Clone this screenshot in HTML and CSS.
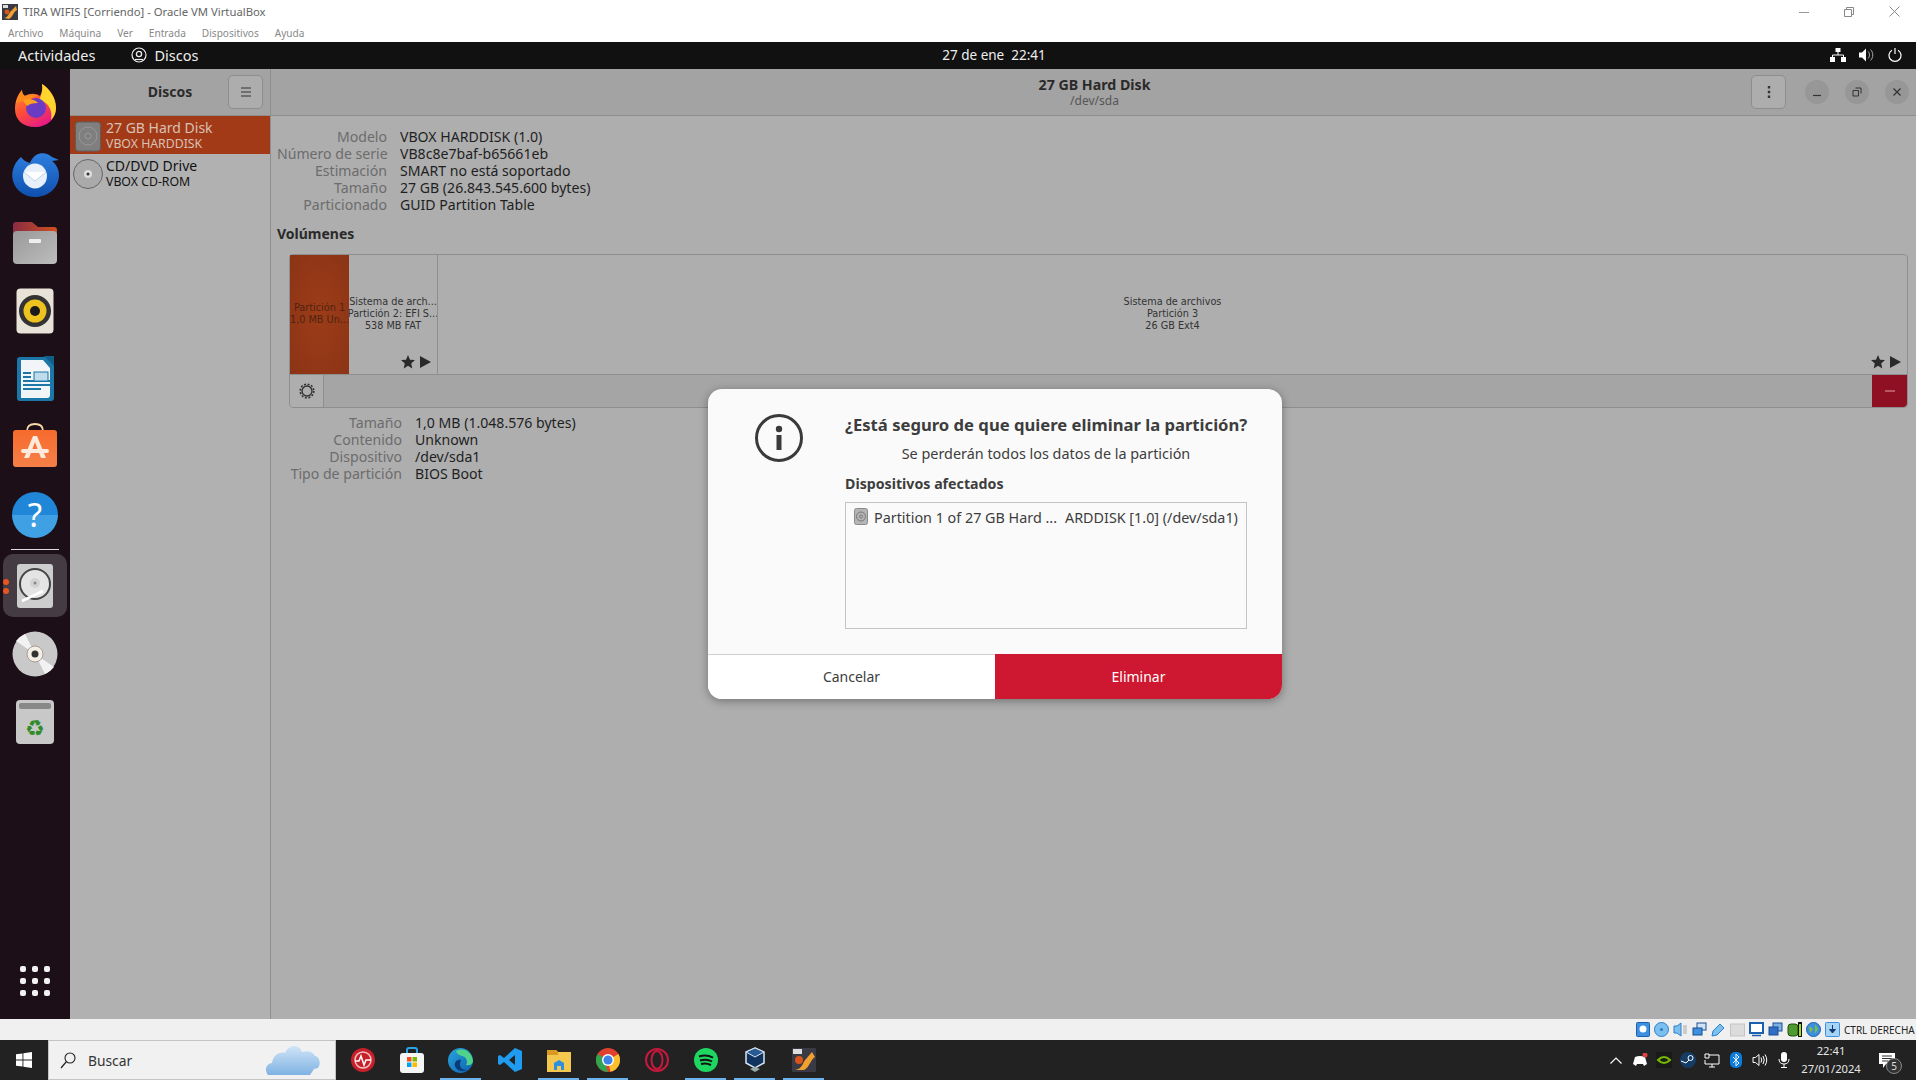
FILE: index.html
```html
<!DOCTYPE html>
<html lang="es">
<head>
  <meta charset="UTF-8">
  <title>TIRA WIFIS [Corriendo] - Oracle VM VirtualBox</title>
  <link rel="stylesheet" href="styles.css">
</head>
<body>
  <!-- VirtualBox host window -->
  <div class="vbox-title">
    <svg class="vbox-logo" width="16" height="16" viewBox="0 0 16 16"><rect width="16" height="16" fill="#3a3a44"/><rect x="1" y="1" width="5" height="3" fill="#ddd"/><path d="M2 14 C7 13 7 8 9 7 L14 2 L15 6 C11 8 11 13 7 15 Z" fill="#f0a030"/><circle cx="5" cy="8" r="2.4" fill="#d8541a"/></svg>
    <span class="vbox-name">TIRA WIFIS [Corriendo] - Oracle VM VirtualBox</span>
    <div class="win-controls">
      <svg width="10" height="10" viewBox="0 0 10 10"><path d="M0 5.5h10" stroke="#999" fill="none"/></svg>
      <svg width="10" height="10" viewBox="0 0 10 10"><path d="M.5 2.5h7v7h-7zM2.5 2.5v-2h7v7h-2" stroke="#888" fill="none"/></svg>
      <svg width="11" height="11" viewBox="0 0 11 11"><path d="M.5.5l10 10M10.5.5l-10 10" stroke="#888" fill="none"/></svg>
    </div>
  </div>
  <div class="vbox-menu">
    <span>Archivo</span><span>Máquina</span><span>Ver</span><span>Entrada</span><span>Dispositivos</span><span>Ayuda</span>
  </div>

  <!-- GNOME top bar -->
  <div class="topbar">
    <div class="topbar-left">
      <span class="activities">Actividades</span>
      <svg width="16" height="16" viewBox="0 0 16 16"><circle cx="8" cy="8" r="7" fill="none" stroke="#eee" stroke-width="1.2"/><circle cx="8" cy="7" r="2.6" fill="none" stroke="#eee" stroke-width="1.3"/><path d="M4 12.5h8" stroke="#eee" stroke-width="1.2"/></svg>
      <span class="app-name">Discos</span>
    </div>
    <div class="clock">27 de ene&nbsp; 22:41</div>
    <div class="topbar-right">
      <svg width="16" height="14" viewBox="0 0 16 14"><path d="M5.5 0h5v4h-5zM0 9h5v5H0zM11 9h5v5h-5z" fill="#fff"/><path d="M8 4v3M2.5 9V7h11v2" stroke="#fff" fill="none"/></svg>
      <svg width="16" height="14" viewBox="0 0 16 14"><path d="M0 4.500h3l4-4v13l-4-4H0z" fill="#fff"/><path d="M9 3.500c2 2 2 5 0 7M11.500 1.500c3 3 3 8 0 11" stroke="#aaa" fill="none"/></svg>
      <svg width="14" height="14" viewBox="0 0 14 14"><path d="M4 2.200a6 6 0 1 0 6 0M7 0v6" stroke="#fff" stroke-width="1.200" fill="none"/></svg>
    </div>
  </div>

  <div class="desktop">
    <!-- Dock -->
    <nav class="dock">
      <div class="dock-item dock-lift">
        <svg width="44" height="44" viewBox="0 0 44 44"><defs><linearGradient id="ff" x1="0" y1="0" x2="0.6" y2="1"><stop offset="0" stop-color="#ffa52a"/><stop offset=".55" stop-color="#ff4f36"/><stop offset="1" stop-color="#e81b87"/></linearGradient></defs><path d="M2 26C2 18 5 11 9 7c0 3 1 5 3 6 5-3 11-3 15 0 2-4 3-8 2-12 8 5 14 14 14 24 0 11-9 19-21 19S2 37 2 26z" fill="url(#ff)"/><path d="M29 1c8 5 14 14 14 24 0 5-2 9-5 12 2-10-3-18-12-20 3-5 4-11 3-16z" fill="#ffd52e"/><path d="M3 20c1-5 3-9 6-13 0 3 1 5 3 6 4-2 10-2 13 0-4 0-7 2-8 4-4 1-10 1-14 3z" fill="#ff8a1e"/><circle cx="23" cy="25" r="10" fill="#6b3bc4"/><path d="M10 18c5-3 12-2 15 2-5 0-9 1-11 3z" fill="#ffa11e"/></svg>
      </div>
      <div class="dock-item">
        <svg width="48" height="46" viewBox="0 0 48 46"><defs><linearGradient id="tb" x1="0" y1="0" x2="0" y2="1"><stop offset="0" stop-color="#2d7fe0"/><stop offset="1" stop-color="#0f4fae"/></linearGradient></defs><path d="M10 5C2 12 0 21 2 29c3 10 12 16 22 16 13 0 24-9 24-22 0-6-3-11-7-14l7-1-7-3c-4-4-11-5-16-2-3 2-5 5-6 8-4-1-7-3-9-6z" fill="url(#tb)"/><ellipse cx="24" cy="24" rx="12" ry="12.500" fill="#e6f0fa"/><path d="M13 20l11 9 11-9" fill="#fff" stroke="#bcd3ea"/></svg>
      </div>
      <div class="dock-item">
        <svg width="46" height="44" viewBox="0 0 46 44"><defs><linearGradient id="fo" x1="0" y1="0" x2="1" y2="0"><stop offset="0" stop-color="#8a2c44"/><stop offset="1" stop-color="#d0501e"/></linearGradient><linearGradient id="fg" x1="0" y1="0" x2="1" y2="1"><stop offset="0" stop-color="#999"/><stop offset="1" stop-color="#bdbdbd"/></linearGradient></defs><path d="M1 14V4q0-3 3-3h16l6 5h16q3 0 3 3v8z" fill="url(#fo)"/><rect x="1" y="10" width="44" height="33" rx="4" fill="url(#fg)"/><rect x="17" y="18" width="12" height="4" rx="1" fill="#eee"/></svg>
      </div>
      <div class="dock-item">
        <svg width="38" height="46" viewBox="0 0 38 46"><rect x=".5" y=".5" width="37" height="45" rx="4" fill="#e8e3d8"/><circle cx="19" cy="23" r="16" fill="#333"/><circle cx="19" cy="23" r="11.500" fill="#eec21f"/><circle cx="19" cy="23" r="5" fill="#1a1a1a"/></svg>
      </div>
      <div class="dock-item">
        <svg width="38" height="46" viewBox="0 0 38 46"><path d="M4 1h26l8 8v33q0 3-3 3H4q-3 0-3-3V4q0-3 3-3z" fill="#1b77a8"/><path d="M5 4h22l7 8v27q0 3-3 3H5z" fill="#f2f5f7"/><path d="M28 0h10v10z" fill="#0f5f88"/><path d="M7 17h8M7 21h8M7 25h27M7 29h27M7 33h18" stroke="#1b77a8" stroke-width="2"/><rect x="18" y="16" width="14" height="9" fill="#bfdcec" stroke="#1b77a8"/></svg>
      </div>
      <div class="dock-item dock-lift">
        <svg width="46" height="46" viewBox="0 0 46 46"><defs><linearGradient id="ap" x1="0" y1="0" x2="0" y2="1"><stop offset="0" stop-color="#f76a2d"/><stop offset="1" stop-color="#f58048"/></linearGradient></defs><path d="M15 9q0-7 8-7t8 7" stroke="#f6d9a8" stroke-width="1.800" fill="none"/><rect x="1" y="8" width="44" height="37" rx="3" fill="url(#ap)"/><path d="M12 36L21 14h4l9 22h-5l-6-16-6 16z" fill="#fdeadd"/><rect x="9" y="27" width="28" height="4" rx="2" fill="#fdeadd"/></svg>
      </div>
      <div class="dock-item">
        <div class="help-icon">?</div>
      </div>
      <div class="dock-sep"></div>
      <div class="dock-item dock-active">
        <span class="run-dots"><i></i><i></i></span>
        <svg width="36" height="44" viewBox="0 0 36 44"><rect width="36" height="44" rx="3" fill="#cdcdcd"/><circle cx="18" cy="20" r="15" fill="#e4e4e4" stroke="#444" stroke-width="2"/><circle cx="18" cy="19" r="5" fill="#d2d2d2"/><circle cx="18" cy="19" r="1.500" fill="#888"/><path d="M5 37l21-10" stroke="#fff" stroke-width="2.500"/></svg>
      </div>
      <div class="dock-item">
        <svg width="46" height="46" viewBox="0 0 46 46"><circle cx="23" cy="23" r="22.500" fill="#c9c9c9"/><path d="M23 23L4 10a23 23 0 0 1 9-7zM23 23l19 13a23 23 0 0 1-9 7z" fill="#f2f2f2"/><circle cx="23" cy="23" r="8" fill="#f4efe4" stroke="#a99"/><circle cx="23" cy="23" r="3.500" fill="#333"/></svg>
      </div>
      <div class="dock-item">
        <svg width="38" height="44" viewBox="0 0 38 44"><rect width="38" height="44" rx="4" fill="#c8c8c8"/><rect x="3" y="3" width="32" height="6" rx="2" fill="#888"/><text class="recycle" x="19" y="36" text-anchor="middle">♻</text></svg>
      </div>
      <div class="dock-grid">
        <i></i><i></i><i></i><i></i><i></i><i></i><i></i><i></i><i></i>
      </div>
    </nav>

    <!-- Discos -->
    <aside class="sidebar">
      <header class="side-head">
        <span class="side-title">Discos</span>
        <button class="head-btn menu-btn">
          <svg width="12" height="10" viewBox="0 0 12 10"><path d="M1 1h10M1 5h10M1 9h10" stroke="#333" fill="none"/></svg>
        </button>
      </header>
      <div class="disk-row disk-selected">
        <svg width="30" height="36" viewBox="0 0 30 36"><rect x="2.500" y="5" width="25" height="29" rx="3" fill="#7f7f7f" stroke="#5e5e5e"/><circle cx="15" cy="19" r="9" fill="none" stroke="#999"/><circle cx="15" cy="19" r="3" fill="none" stroke="#999"/></svg>
        <div class="disk-text"><div class="disk-name">27 GB Hard Disk</div><div class="disk-sub">VBOX HARDDISK</div></div>
      </div>
      <div class="disk-row">
        <svg width="30" height="36" viewBox="0 0 30 36"><circle cx="15" cy="19" r="14.500" fill="#aaa" stroke="#666"/><circle cx="15" cy="19" r="4" fill="#ddd"/><circle cx="15" cy="19" r="1.500" fill="#333"/></svg>
        <div class="disk-text"><div class="disk-name">CD/DVD Drive</div><div class="disk-sub">VBOX CD-ROM</div></div>
      </div>
    </aside>

    <main class="content">
      <header class="content-head">
        <div class="head-title">
          <div class="disk-heading">27 GB Hard Disk</div>
          <div class="disk-path">/dev/sda</div>
        </div>
        <button class="head-btn kebab-btn">
          <svg width="4" height="12" viewBox="0 0 4 12"><path d="M.8 0h2.400v2.400H.8zM.8 4.800h2.400v2.400H.8zM.8 9.600h2.400V12H.8z" fill="#333"/></svg>
        </button>
        <span class="round-btn"><svg width="10" height="10" viewBox="0 0 10 10"><path d="M1 8.500h8" stroke="#333" stroke-width="1.200"/></svg></span>
        <span class="round-btn"><svg width="10" height="10" viewBox="0 0 10 10"><path d="M1 3.500h5.500V9H1zM3.500 1H9v5.500" stroke="#333" fill="none"/></svg></span>
        <span class="round-btn"><svg width="10" height="10" viewBox="0 0 10 10"><path d="M1.500 1.500l7 7M8.500 1.500l-7 7" stroke="#333" stroke-width="1.300"/></svg></span>
      </header>

      <div class="info-grid">
        <span class="info-label">Modelo</span><span>VBOX HARDDISK (1.0)</span>
        <span class="info-label">Número de serie</span><span>VB8c8e7baf-b65661eb</span>
        <span class="info-label">Estimación</span><span>SMART no está soportado</span>
        <span class="info-label">Tamaño</span><span>27 GB (26.843.545.600 bytes)</span>
        <span class="info-label">Particionado</span><span>GUID Partition Table</span>
      </div>

      <h2 class="vol-title">Volúmenes</h2>

      <div class="volumes">
        <div class="vol-bar">
          <div class="part part-one"><div>Partición 1</div><div>1,0 MB Un...</div></div>
          <div class="part part-two">
            <div>Sistema de arch...</div><div>Partición 2: EFI S...</div><div>538 MB FAT</div>
            <div class="emblems">
              <svg width="14" height="14" viewBox="0 0 14 14"><path d="M7 0l2 4.700 5 .4-3.800 3.300L11.300 13.500 7 10.800 2.700 13.500 3.800 8.400 0 5.100l5-.4z" fill="#2a2a2a"/></svg>
              <svg width="11" height="12" viewBox="0 0 11 12"><path d="M0 0l11 6-11 6z" fill="#2a2a2a"/></svg>
            </div>
          </div>
          <div class="part part-three">
            <div>Sistema de archivos</div><div>Partición 3</div><div>26 GB Ext4</div>
            <div class="emblems">
              <svg width="14" height="14" viewBox="0 0 14 14"><path d="M7 0l2 4.700 5 .4-3.800 3.300L11.300 13.500 7 10.800 2.700 13.500 3.800 8.400 0 5.100l5-.4z" fill="#2a2a2a"/></svg>
              <svg width="11" height="12" viewBox="0 0 11 12"><path d="M0 0l11 6-11 6z" fill="#2a2a2a"/></svg>
            </div>
          </div>
        </div>
        <div class="vol-tools">
          <span class="gear-btn">
            <svg width="16" height="16" viewBox="0 0 16 16"><circle cx="8" cy="8" r="5" fill="none" stroke="#333" stroke-width="1.400"/><circle cx="8" cy="8" r="6.800" fill="none" stroke="#333" stroke-width="1.600" stroke-dasharray="2 1.600"/></svg>
          </span>
          <span class="del-btn"><svg width="10" height="2" viewBox="0 0 10 2"><path d="M0 1h10" stroke="#e3a0a8"/></svg></span>
        </div>
      </div>

      <div class="info-grid part-info">
        <span class="info-label">Tamaño</span><span>1,0 MB (1.048.576 bytes)</span>
        <span class="info-label">Contenido</span><span>Unknown</span>
        <span class="info-label">Dispositivo</span><span>/dev/sda1</span>
        <span class="info-label">Tipo de partición</span><span>BIOS Boot</span>
      </div>
    </main>

    <!-- Confirm dialog -->
    <section class="dialog">
      <div class="dialog-body">
        <svg class="dialog-icon" width="48" height="48" viewBox="0 0 48 48"><circle cx="24" cy="24" r="22.500" fill="none" stroke="#3a3a3a" stroke-width="3"/><circle cx="24" cy="15" r="3.200" fill="#3a3a3a"/><rect x="21.500" y="21" width="5" height="15" fill="#3a3a3a"/></svg>
        <div class="dialog-main">
          <h1 class="dialog-title">¿Está seguro de que quiere eliminar la partición?</h1>
          <p class="dialog-sub">Se perderán todos los datos de la partición</p>
          <h3 class="dialog-label">Dispositivos afectados</h3>
          <div class="dialog-list">
            <svg width="14" height="17" viewBox="0 0 14 17"><rect x=".5" y=".5" width="13" height="16" rx="2" fill="#b5b5b5" stroke="#8a8a8a"/><circle cx="7" cy="8.500" r="4.500" fill="none" stroke="#777"/><circle cx="7" cy="8.500" r="1.500" fill="none" stroke="#777"/></svg>
            <span class="list-name">Partition 1 of 27 GB Hard ...</span>
            <span class="list-rest">ARDDISK [1.0] (/dev/sda1)</span>
          </div>
        </div>
      </div>
      <div class="dialog-actions">
        <button class="btn-cancel">Cancelar</button>
        <button class="btn-delete">Eliminar</button>
      </div>
    </section>
  </div>

  <!-- VirtualBox status bar -->
  <div class="statusbar">
    <svg width="14" height="15" viewBox="0 0 14 15"><rect x=".5" y=".5" width="13" height="14" rx="1" fill="#3d8fe0" stroke="#1c5fae"/><circle cx="7" cy="7" r="3.500" fill="#fff"/></svg>
    <svg width="15" height="15" viewBox="0 0 15 15"><circle cx="7.500" cy="7.500" r="7" fill="#7cc0f0" stroke="#2f7fc8"/><circle cx="7.500" cy="7.500" r="1.600" fill="#2f7fc8"/></svg>
    <svg width="15" height="15" viewBox="0 0 15 15"><path d="M1 4h3l4-3v13l-4-3H1z" fill="#7cc0f0" stroke="#2f7fc8"/><path d="M10 3v9h4V3z" fill="#ccc"/></svg>
    <svg width="15" height="15" viewBox="0 0 15 15"><rect x="5" y="1" width="9" height="7" fill="#cfe4f7" stroke="#1c4f8e"/><rect x="1" y="6" width="9" height="7" fill="#3d8fe0" stroke="#1c4f8e"/></svg>
    <svg width="15" height="15" viewBox="0 0 15 15"><path d="M1 14l1-5 7-7 4 4-7 7z" fill="#7cc0f0" stroke="#2f7fc8"/></svg>
    <svg width="15" height="15" viewBox="0 0 15 15"><rect x=".5" y="2" width="14" height="12" fill="#dcdcdc" stroke="#c4c4c4"/></svg>
    <svg width="15" height="15" viewBox="0 0 15 15"><rect x="1" y="1" width="13" height="10" fill="#fff" stroke="#1c5fae" stroke-width="2"/><path d="M3 13.500h9" stroke="#1c5fae" stroke-width="1.500"/></svg>
    <svg width="15" height="15" viewBox="0 0 15 15"><rect x="5" y="1" width="9" height="8" fill="#7cb0e8" stroke="#1c4f8e"/><rect x="1" y="5" width="9" height="8" fill="#2f6fc8" stroke="#1c4f8e"/></svg>
    <svg width="15" height="15" viewBox="0 0 15 15"><rect x="1" y="2" width="10" height="12" rx="3" fill="#4f9a30" stroke="#1f4f10"/><rect x="11" y="0" width="4" height="15" fill="#111"/><rect x="12" y="2" width="2" height="12" fill="#9ee020"/></svg>
    <svg width="15" height="15" viewBox="0 0 15 15"><circle cx="7.500" cy="7.500" r="7" fill="#3d8fe0" stroke="#1c5fae"/><path d="M3 4l4 3-3 4M9 2l3 5-3 5" fill="#7cc040"/></svg>
    <svg width="15" height="15" viewBox="0 0 15 15"><rect x=".5" y=".5" width="14" height="14" rx="1" fill="#a8d4f4" stroke="#3d8fe0"/><path d="M7.500 3v5M4.500 7.500h6l-3 3.500z" fill="#123a78" stroke="#123a78"/></svg>
    <span class="status-text">CTRL DERECHA</span>
  </div>

  <!-- Windows taskbar -->
  <footer class="taskbar">
    <div class="start-btn">
      <svg width="16" height="16" viewBox="0 0 16 16"><path d="M0 2.300L6.500 1.400V7.500H0zM7.400 1.300L16 0V7.500H7.400zM0 8.500H6.500V14.600L0 13.700zM7.400 8.500H16V16L7.400 14.700z" fill="#fff"/></svg>
    </div>
    <div class="search-box">
      <svg width="16" height="17" viewBox="0 0 16 17"><circle cx="10" cy="6" r="5" fill="none" stroke="#222" stroke-width="1.100"/><path d="M6.500 9.500L1 16" stroke="#222" stroke-width="1.200"/></svg>
      <span class="search-text">Buscar</span>
      <svg class="cloud" width="56" height="30" viewBox="0 0 56 30"><defs><linearGradient id="cl" x1="0" y1="0" x2="0" y2="1"><stop offset="0" stop-color="#cfe4f8"/><stop offset="1" stop-color="#7fb2e2"/></linearGradient></defs><path d="M3 30c-4-5-2-11 4-12 1-7 7-12 13-10 4-9 14-9 17-1 6-2 11 0 13 4 5 1 6 8 3 12l-4 1-4 6z" fill="url(#cl)"/></svg>
    </div>
    <div class="task-icons">
      <span class="task-slot"><svg width="24" height="24" viewBox="0 0 24 24"><circle cx="12" cy="12" r="12" fill="#c8202a"/><circle cx="12" cy="12" r="8" fill="none" stroke="#f2c4c4" stroke-width="1.500"/><path d="M4 13h4l2-5 3 9 2-5h5" fill="none" stroke="#fff" stroke-width="1.500"/></svg></span>
      <span class="task-slot"><svg width="24" height="26" viewBox="0 0 24 26"><path d="M7 7V3q0-2 2-2h6q2 0 2 2v4" fill="none" stroke="#2aa4e8" stroke-width="2"/><rect y="6" width="24" height="20" rx="3" fill="#f5f5f5"/><rect x="7" y="10" width="4.500" height="4.500" fill="#f25022"/><rect x="12.500" y="10" width="4.500" height="4.500" fill="#7fba00"/><rect x="7" y="15.500" width="4.500" height="4.500" fill="#00a4ef"/><rect x="12.500" y="15.500" width="4.500" height="4.500" fill="#ffb900"/></svg></span>
      <span class="task-slot task-open"><svg width="25" height="25" viewBox="0 0 25 25"><defs><linearGradient id="ed" x1="0" y1="0" x2="1" y2="1"><stop offset="0" stop-color="#2aa6dc"/><stop offset="1" stop-color="#0c5fb0"/></linearGradient></defs><circle cx="12.500" cy="12.500" r="12.500" fill="url(#ed)"/><path d="M8 3c8-4 16 1 17 10 0 3-3 5-7 4 2-3 1-8-4-9-3-1-5-2-6-5z" fill="#4fd38a"/><path d="M13 12c-5-1-8 4-5 8 2 3 7 4 11 2-5 0-9-3-6-10z" fill="#0b3a78"/></svg></span>
      <span class="task-slot"><svg width="24" height="24" viewBox="0 0 24 24"><path d="M17 0l7 3v18l-7 3-11-10-4 3-2-1V8l2-1 4 3zM17 7l-6 5 6 5z" fill="#1f9cf0" fill-rule="evenodd"/></svg></span>
      <span class="task-slot task-open"><svg width="24" height="24" viewBox="0 0 24 24"><path d="M0 2h9l2 2h13v20H0z" fill="#f4c74e"/><path d="M0 2h9l2 2v3H0z" fill="#d99a24"/><path d="M7 22v-7l5-3 5 3v7h-3v-4h-4v4z" fill="#2d8fe0"/></svg></span>
      <span class="task-slot task-open"><svg width="24" height="24" viewBox="0 0 24 24"><circle cx="12" cy="12" r="12" fill="#e0402e"/><path d="M12 12L1.600 18a12 12 0 0 1 0-12z" fill="#32a34f"/><path d="M12 12l10.400-6a12 12 0 0 1-8 17.800z" fill="#fbc02d"/><path d="M12 24a12 12 0 0 1-10.400-6L8 12z" fill="#32a34f"/><circle cx="12" cy="12" r="6" fill="#fff"/><circle cx="12" cy="12" r="4.600" fill="#3f82e8"/></svg></span>
      <span class="task-slot"><svg width="24" height="24" viewBox="0 0 24 24"><circle cx="12" cy="12" r="11" fill="none" stroke="#c8183e" stroke-width="2"/><ellipse cx="12" cy="12" rx="5.500" ry="9" fill="none" stroke="#c8183e" stroke-width="2"/></svg></span>
      <span class="task-slot task-open"><svg width="24" height="24" viewBox="0 0 24 24"><circle cx="12" cy="12" r="12" fill="#1ed760"/><path d="M5 8.500c5-1.500 10-1 14 1.200M6 12.500c4-1 9-.7 12 1M7 16c3-.8 7-.5 10 1" fill="none" stroke="#121212" stroke-width="2"/></svg></span>
      <span class="task-slot task-open"><svg width="20" height="26" viewBox="0 0 20 26"><path d="M10 1l9 4v11l-9 5-9-5V5z" fill="#10345e" stroke="#d8e4f0" stroke-width="1.500"/><path d="M10 1l9 4-9 5-9-5z" fill="#2a5a94" stroke="#d8e4f0"/><path d="M5 22l5 3 5-3-5-2z" fill="#9aa"/></svg></span>
      <span class="task-slot task-open"><svg width="24" height="24" viewBox="0 0 24 24"><rect width="24" height="24" rx="1" fill="#3a3a44"/><rect x="1" y="1" width="9" height="5" fill="#ddd"/><path d="M3 22c8-1 8-9 11-11l6-7 3 5c-5 3-5 10-11 13z" fill="#f0a030"/><circle cx="7" cy="12" r="4" fill="#d8541a"/></svg></span>
    </div>
    <div class="tray">
      <span class="tray-slot"><svg width="12" height="7" viewBox="0 0 12 7"><path d="M.5 6.500L6 1l5.500 5.500" stroke="#fff" fill="none" stroke-width="1.100"/></svg></span>
      <span class="tray-slot"><svg width="16" height="14" viewBox="0 0 16 14"><path d="M3 4q5-2 10 0l2 7-3 2-1-2H5l-1 2-3-2z" fill="#fff"/><circle cx="13" cy="2" r="2.500" fill="#e04040"/></svg></span>
      <span class="tray-slot"><svg width="16" height="16" viewBox="0 0 16 16"><rect width="16" height="16" fill="#1a1a1a"/><path d="M2 8q6-6 12 0-6 6-12 0z" fill="none" stroke="#76b900" stroke-width="2"/></svg></span>
      <span class="tray-slot"><svg width="16" height="16" viewBox="0 0 16 16"><circle cx="8" cy="8" r="8" fill="#153c64"/><circle cx="10.500" cy="6" r="2.500" fill="none" stroke="#fff"/><path d="M1 9l5 2 3-3" stroke="#fff" fill="none"/></svg></span>
      <span class="tray-slot"><svg width="16" height="15" viewBox="0 0 16 15"><path d="M5 2h10v9H1V7M1 1h4v4H1zM5 14h6M8 11v3" stroke="#fff" fill="none"/></svg></span>
      <span class="tray-slot"><svg width="12" height="16" viewBox="0 0 12 16"><rect width="12" height="16" rx="5" fill="#0a7ce0"/><path d="M3 5l6 6-3 3V2l3 3-6 6" stroke="#fff" fill="none"/></svg></span>
      <span class="tray-slot"><svg width="16" height="14" viewBox="0 0 16 14"><path d="M1 4.500h2.500L7 1.500v11L3.500 9.500H1zM9 4.500q1.500 2.500 0 5M11 3q2.500 4 0 8M13 1.500q3.500 5.500 0 11" stroke="#fff" fill="none"/></svg></span>
      <span class="tray-slot"><svg width="12" height="16" viewBox="0 0 12 16"><rect x="3" width="6" height="10" rx="3" fill="#fff"/><path d="M1 7q0 5 5 5t5-5M6 12v3M3 15.500h6" stroke="#fff" fill="none"/></svg></span>
      <div class="tray-clock"><div>22:41</div><div>27/01/2024</div></div>
      <span class="notif">
        <svg width="16" height="15" viewBox="0 0 16 15"><path d="M0 0h16v11H7l-3 4v-4H0z" fill="#fff"/><path d="M3 3h10M3 5.500h10M3 8h6" stroke="#333"/></svg>
        <span class="notif-count">5</span>
      </span>
    </div>
  </footer>
</body>
</html>
```

FILE: styles.css
```css
* {
  box-sizing: border-box;
}
body {
  margin: 0;
  width: 1916px;
  height: 1080px;
  overflow: hidden;
  display: flex;
  flex-direction: column;
  font-family: "Noto Sans", sans-serif;
  background: #fff;
}
h1, h2, h3, p {
  margin: 0;
}
button {
  font-family: inherit;
  cursor: pointer;
}

/* VirtualBox window */
.vbox-title {
  height: 23px;
  flex: none;
  display: flex;
  align-items: center;
  padding-left: 2px;
  background: #fff;
}
.vbox-name {
  margin-left: 5px;
  font-size: 11.300px;
  color: #666;
}
.win-controls {
  margin-left: auto;
  display: flex;
  gap: 35px;
  padding-right: 16px;
  align-items: center;
}
.vbox-menu {
  height: 19px;
  flex: none;
  display: flex;
  gap: 16px;
  padding-left: 8px;
  align-items: center;
  font-size: 10.100px;
  color: #888;
  background: #fff;
}

/* Top bar */
.topbar {
  height: 27px;
  flex: none;
  display: grid;
  grid-template-columns: 1fr auto 1fr;
  align-items: center;
  background: #111;
  color: #eee;
  font-size: 14.500px;
  padding: 0 14px 1px 18px;
}
.topbar-left {
  display: flex;
  align-items: center;
}
.activities {
  margin-right: 36px;
}
.app-name {
  margin-left: 7px;
}
.clock {
  font-size: 13.500px;
  margin-left: 68px;
}
.topbar-right {
  display: flex;
  justify-content: flex-end;
  align-items: center;
  gap: 13px;
}

.desktop {
  flex: 1;
  display: flex;
  position: relative;
  min-height: 0;
}

/* Dock */
.dock {
  width: 70px;
  flex: none;
  display: flex;
  flex-direction: column;
  align-items: center;
  padding: 4px 0;
  background: #1c0f18;
}
.dock-item {
  width: 64px;
  height: 68px;
  flex: none;
  position: relative;
  display: flex;
  align-items: center;
  justify-content: center;
}
.dock-lift svg {
  margin-bottom: 4px;
}
.dock-active {
  margin-top: 4px;
  height: 63px;
  margin-bottom: 3px;
  background: #443c42;
  border-radius: 10px;
}
.run-dots {
  position: absolute;
  left: 0;
  top: 25px;
  display: flex;
  flex-direction: column;
  gap: 3px;
}
.run-dots i {
  width: 6px;
  height: 6px;
  border-radius: 50%;
  background: #e9541f;
}
.help-icon {
  width: 46px;
  height: 46px;
  border-radius: 50%;
  background: linear-gradient(#1f86d8 50%, #3fa0e4 50%);
  color: #fff;
  font-size: 33px;
  line-height: 46px;
  text-align: center;
}
.recycle {
  font-family: "DejaVu Sans", sans-serif;
  font-size: 22px;
  fill: #2f8a28;
}
.dock-sep {
  width: 48px;
  height: 1px;
  flex: none;
  background: #ddd;
}
.dock-grid {
  margin-top: auto;
  height: 68px;
  display: grid;
  grid-template-columns: repeat(3, 6px);
  grid-auto-rows: 6px;
  gap: 6px;
  align-content: center;
}
.dock-grid i {
  background: #f2f2f2;
  border-radius: 2px;
}

/* Sidebar */
.sidebar {
  width: 201px;
  flex: none;
  background: #b1b1b1;
  border-right: 1px solid #8e8e8e;
  color: #111;
}
.side-head {
  height: 47px;
  display: flex;
  align-items: center;
  justify-content: flex-end;
  position: relative;
  padding-right: 7px;
  background: #a3a3a3;
  border-bottom: 1px solid #8e8e8e;
}
.side-title {
  position: absolute;
  left: 0;
  top: 13px;
  width: 200px;
  text-align: center;
  font-size: 14px;
  font-weight: 700;
  color: #2c2c2c;
}
.head-btn {
  height: 34px;
  width: 35px;
  padding: 0;
  display: flex;
  align-items: center;
  justify-content: center;
  background: #adadad;
  border: 1px solid #8d8d8d;
  border-radius: 5px;
}
.disk-row {
  height: 38px;
  display: flex;
  align-items: center;
  gap: 3px;
  padding-left: 3px;
}
.disk-row svg {
  flex: none;
}
.disk-selected {
  background: #a23a18;
  color: #d9c0b4;
}
.disk-text {
  line-height: 15px;
}
.disk-name {
  font-size: 14px;
}
.disk-sub {
  font-size: 12.300px;
  padding-top: 1px;
}

/* Content */
.content {
  flex: 1;
  min-width: 0;
  background: #aeaeae;
  color: #1f1f1f;
  font-size: 14.100px;
}
.content-head {
  height: 47px;
  display: flex;
  align-items: center;
  padding-right: 7px;
  background: #a3a3a3;
  border-bottom: 1px solid #8e8e8e;
}
.head-title {
  position: absolute;
  left: 273px;
  right: 0;
  text-align: center;
  pointer-events: none;
}
.disk-heading {
  font-size: 14.200px;
  font-weight: 700;
  line-height: 17px;
  color: #2a2a2a;
}
.disk-path {
  font-size: 12px;
  line-height: 15px;
  color: #555;
}
.kebab-btn {
  margin-left: auto;
  margin-right: 19px;
}
.round-btn {
  width: 24px;
  height: 24px;
  border-radius: 50%;
  background: #979797;
  display: flex;
  align-items: center;
  justify-content: center;
  margin-left: 16px;
}
.kebab-btn + .round-btn {
  margin-left: 0;
}
.info-grid {
  display: grid;
  grid-template-columns: 110px auto;
  justify-content: start;
  column-gap: 13px;
  padding: 12px 0 0 6px;
  line-height: 17px;
}
.info-label {
  text-align: right;
  color: #6c6c6c;
  white-space: nowrap;
}
.vol-title {
  font-size: 14px;
  font-weight: 700;
  line-height: 18px;
  margin: 12px 0 0 6px;
  color: #2a2a2a;
}
.volumes {
  margin: 11px 8px 0 18px;
  height: 154px;
  border: 1px solid #8e8e8e;
  border-radius: 4px;
  display: flex;
  flex-direction: column;
}
.vol-bar {
  height: 120px;
  display: flex;
  border-bottom: 1px solid #8e8e8e;
}
.part {
  position: relative;
  display: flex;
  flex-direction: column;
  justify-content: center;
  align-items: center;
  padding-bottom: 2px;
  font-family: "DejaVu Sans", sans-serif;
  font-size: 9.700px;
  line-height: 12px;
  color: #333;
  white-space: nowrap;
  overflow: hidden;
}
.part-one {
  width: 59px;
  flex: none;
  background: radial-gradient(ellipse at center, #9d3c17, #8b3416);
  color: #4e2412;
}
.part-two {
  width: 89px;
  flex: none;
  border-right: 1px solid #8e8e8e;
}
.part-three {
  flex: 1;
}
.emblems {
  position: absolute;
  right: 6px;
  bottom: 5px;
  display: flex;
  align-items: center;
  gap: 5px;
}
.vol-tools {
  flex: 1;
  display: flex;
  justify-content: space-between;
  background: #a5a5a5;
  border-radius: 0 0 4px 4px;
}
.gear-btn {
  width: 34px;
  display: flex;
  align-items: center;
  justify-content: center;
  background: #aeaeae;
  border-right: 1px solid #8e8e8e;
  border-radius: 0 0 0 4px;
}
.del-btn {
  width: 35px;
  display: flex;
  align-items: center;
  justify-content: center;
  background: #8f1023;
  border-radius: 0 0 4px 0;
}
.part-info {
  grid-template-columns: 113px auto;
  padding: 6px 0 0 18px;
}

/* Dialog */
.dialog {
  position: absolute;
  left: 708px;
  top: 320px;
  width: 574px;
  height: 310px;
  display: flex;
  flex-direction: column;
  background: #fafafa;
  border-radius: 14px;
  overflow: hidden;
  box-shadow: 0 2px 10px rgba(0, 0, 0, 0.35);
  color: #3d3d3d;
}
.dialog-body {
  flex: 1;
  display: flex;
  padding: 25px 35px 0 47px;
}
.dialog-icon {
  flex: none;
}
.dialog-main {
  margin-left: 42px;
  width: 402px;
  flex: none;
}
.dialog-title {
  font-size: 16.650px;
  font-weight: 700;
  line-height: 22px;
  white-space: nowrap;
}
.dialog-sub {
  margin-top: 9px;
  font-size: 14.400px;
  line-height: 18px;
  text-align: center;
}
.dialog-label {
  margin-top: 12px;
  font-size: 14.200px;
  font-weight: 700;
  line-height: 18px;
}
.dialog-list {
  margin-top: 9px;
  height: 127px;
  display: flex;
  align-items: flex-start;
  padding: 6px 6px 0 8px;
  background: #fafafa;
  border: 1px solid #c4c4c4;
  font-size: 14.350px;
  line-height: 18px;
  white-space: nowrap;
}
.dialog-list svg {
  margin-top: -1px;
}
.list-name {
  margin-left: 6px;
}
.list-rest {
  margin-left: 8px;
}
.dialog-actions {
  height: 45px;
  flex: none;
  display: flex;
  border-top: 1px solid #cfcfcf;
}
.dialog-actions button {
  flex: 1;
  border: 0;
  font-size: 14px;
}
.btn-cancel {
  background: #fff;
  color: #3d3d3d;
  padding-bottom: 3px;
}
.btn-delete {
  background: #ce1730;
  color: #fff;
  margin-top: -1px;
}

/* Status bar */
.statusbar {
  height: 21px;
  flex: none;
  display: flex;
  justify-content: flex-end;
  align-items: center;
  gap: 4px;
  background: #f0f0f0;
}
.status-text {
  width: 72px;
  white-space: nowrap;
  font-size: 10px;
  color: #222;
}

/* Taskbar */
.taskbar {
  height: 40px;
  flex: none;
  display: flex;
  align-items: stretch;
  background: #222;
}
.start-btn {
  width: 48px;
  flex: none;
  display: flex;
  align-items: center;
  justify-content: center;
}
.search-box {
  width: 288px;
  flex: none;
  display: flex;
  align-items: center;
  padding-left: 11px;
  background: #f1f1f1;
  border: 1px solid #c4c4c4;
}
.search-text {
  margin-left: 12px;
  font-size: 13.800px;
  color: #333;
}
.cloud {
  margin-left: auto;
  margin-right: 14px;
}
.task-icons {
  margin-left: 2px;
  display: flex;
}
.task-slot {
  width: 49px;
  display: flex;
  align-items: center;
  justify-content: center;
  position: relative;
}
.task-open::after {
  content: "";
  position: absolute;
  left: 4px;
  right: 4px;
  bottom: 0;
  height: 2px;
  background: #6cb2ec;
}
.tray {
  margin-left: auto;
  display: flex;
  align-items: center;
  padding-right: 21px;
}
.tray-slot {
  width: 24px;
  display: flex;
  justify-content: center;
}
.tray-clock {
  margin-left: 4px;
  text-align: center;
  font-size: 11.200px;
  line-height: 18px;
  color: #e6e6e6;
  width: 62px;
}
.notif {
  position: relative;
  margin-left: 17px;
  display: flex;
}
.notif-count {
  position: absolute;
  left: 7px;
  top: 5px;
  width: 16px;
  height: 16px;
  border-radius: 50%;
  background: #333;
  border: 1px solid #888;
  color: #ddd;
  font-size: 10px;
  line-height: 14px;
  text-align: center;
}
```
